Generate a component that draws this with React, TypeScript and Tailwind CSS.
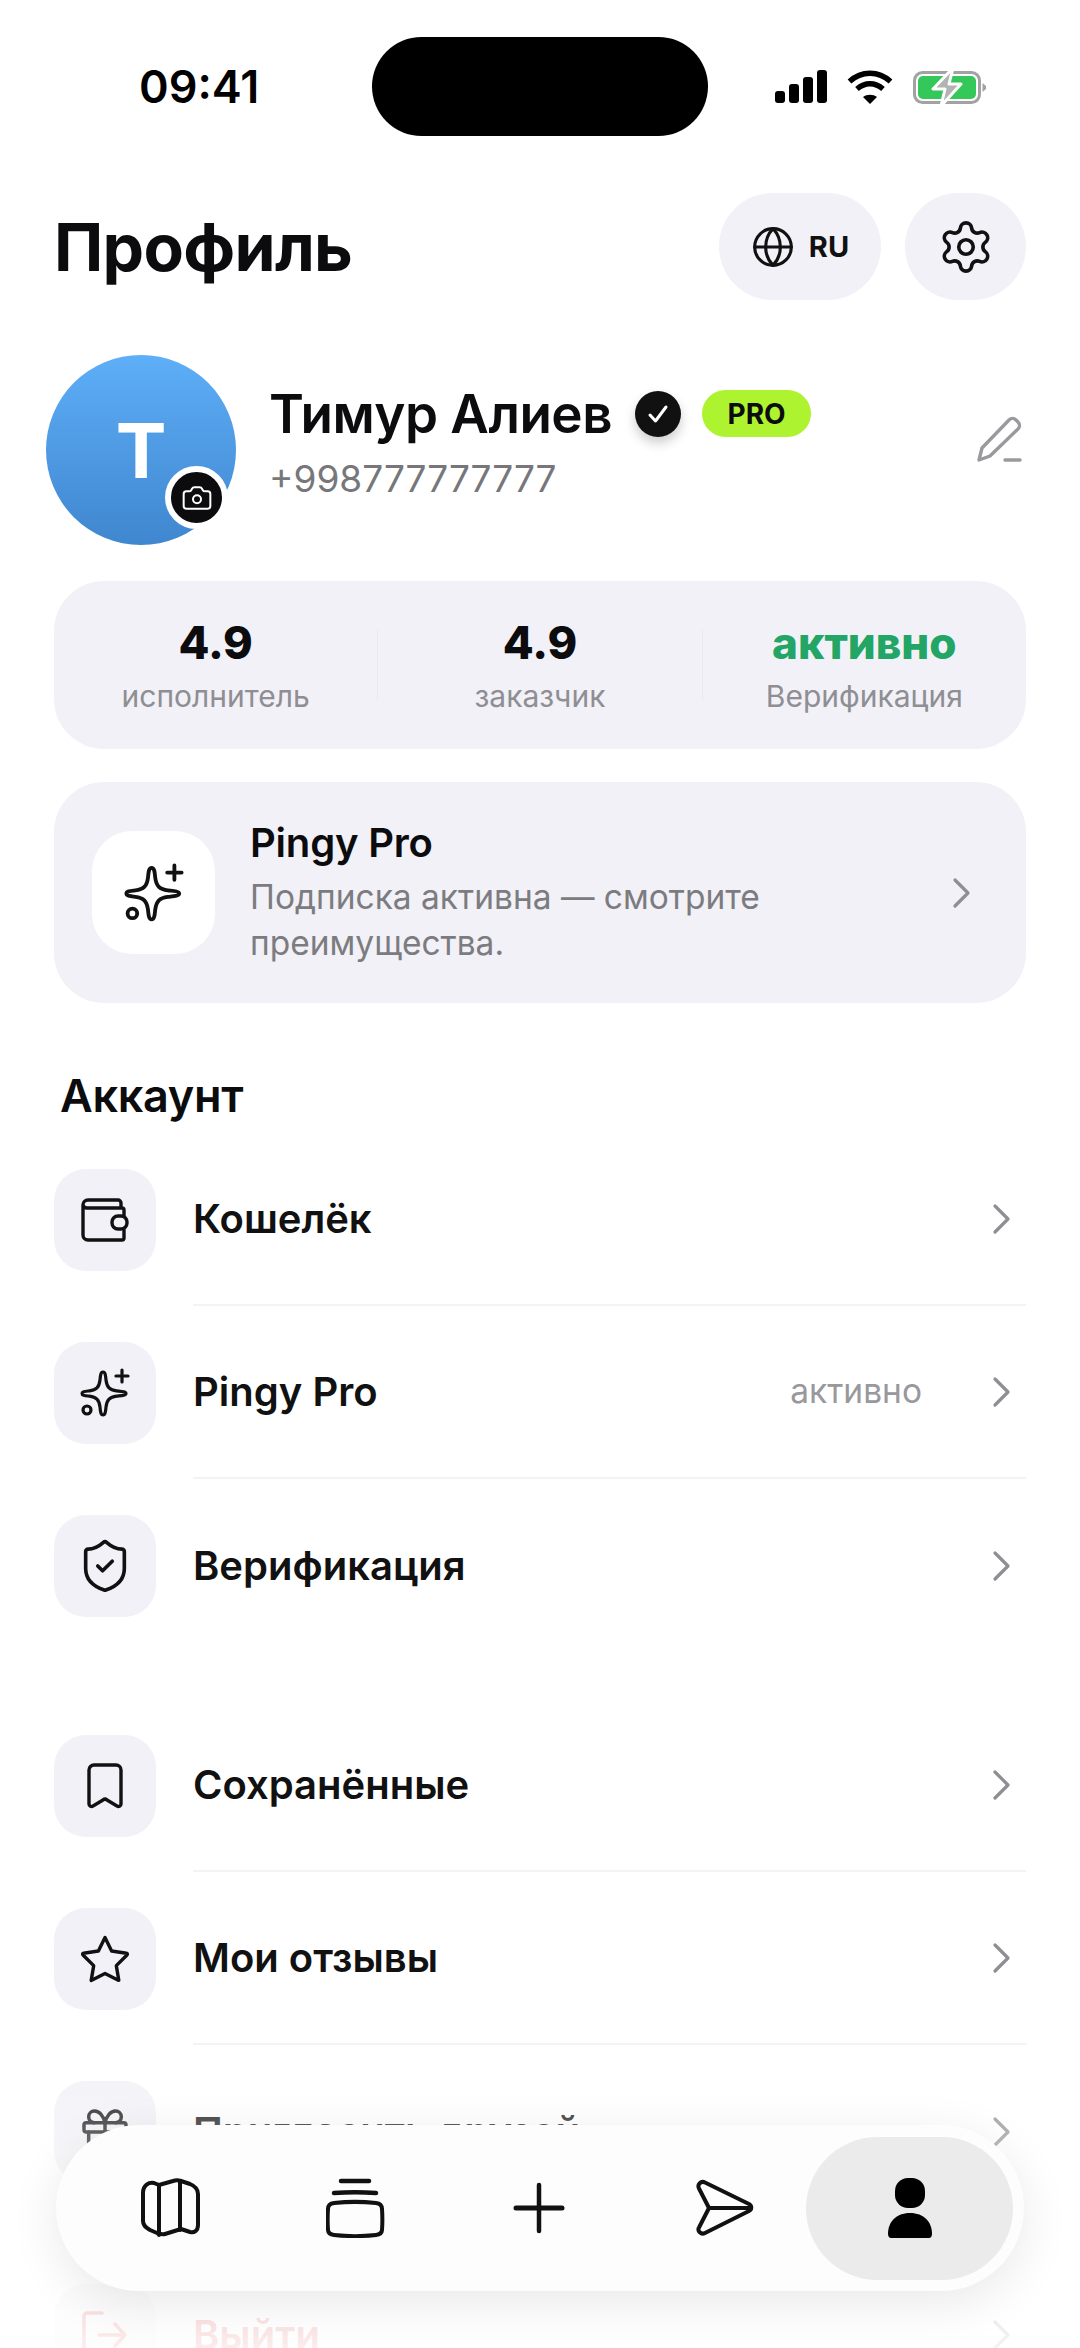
import { Camera, Gift, Globe, Settings, ShieldCheck } from "lucide-react";
import type { ReactNode } from "react";

const font = { fontFamily: "Inter, 'Noto Sans', sans-serif" };

function Chevron({ className = "" }: { className?: string }) {
  return (
    <svg width="20" height="34" viewBox="0 0 20 34" fill="none" className={className}>
      <path d="M3 4l13 13L3 30" stroke="currentColor" strokeWidth="3.2" strokeLinecap="round" strokeLinejoin="round" />
    </svg>
  );
}

function Sparkle({ size = 50 }: { size?: number }) {
  return (
    <svg width={size} height={size} viewBox="0 0 50 50" fill="none" stroke="#111" strokeWidth="3.2" strokeLinecap="round" strokeLinejoin="round">
      <path d="M23 4c2.4 0 2.6 4 3 8 .9 7.500 3.800 10 10.500 10.800 4 .5 9.500.6 9.500 2.700s-5.500 2.200-9.500 2.700C29.800 29 26.900 31.500 26 39c-.4 4-.6 8-3 8s-2.600-4-3-8c-.9-7.500-3.800-10-10.500-10.800C5.500 27.700 2 27.600 2 25.500s3.500-2.200 7.500-2.700C16.200 22 19.100 19.500 20 12c.4-4 .6-8 3-8z" />
      <circle cx="7" cy="42" r="4" />
      <path d="M42 2v12M36 8h12" />
    </svg>
  );
}

function WalletIcon() {
  return (
    <svg width="48" height="46" viewBox="0 0 48 46" fill="none" stroke="#111" strokeWidth="3.400" strokeLinecap="round" strokeLinejoin="round">
      <path d="M2 8a5 5 0 0 1 5-5h30a3 3 0 0 1 3 3v4M2 8v30a5 5 0 0 0 5 5h34a2 2 0 0 0 2-2v-8M2 8a4 4 0 0 0 4 3h35a2 2 0 0 1 2 2v6" />
      <rect x="31" y="19" width="15" height="13" rx="6" />
    </svg>
  );
}

function BookmarkIcon() {
  return (
    <svg width="36" height="46" viewBox="0 0 36 46" fill="none" stroke="#111" strokeWidth="3.400" strokeLinecap="round" strokeLinejoin="round">
      <path d="M2 7a5 5 0 0 1 5-5h22a5 5 0 0 1 5 5v34a2.500 2.500 0 0 1-4 2l-10-6a3 3 0 0 0-4 0L6 43a2.500 2.500 0 0 1-4-2z" />
    </svg>
  );
}

function StarIcon() {
  return (
    <svg width="50" height="48" viewBox="0 0 50 48" fill="none" stroke="#111" strokeWidth="3.400" strokeLinecap="round" strokeLinejoin="round">
      <path d="M25 2.500l6.600 13.500 14.900 2.200a1 1 0 0 1 .5 1.800L36.300 30.600l2.500 14.800-13.800-7-13.800 7 2.500-14.800L3 20a1 1 0 0 1 .5-1.800L18.400 16z" />
    </svg>
  );
}

function LogoutIcon() {
  return (
    <svg width="46" height="50" viewBox="0 0 46 50" fill="none" stroke="#e5484d" strokeWidth="3.400" strokeLinecap="round" strokeLinejoin="round">
      <path d="M20 3H5a3 3 0 0 0-3 3v38a3 3 0 0 0 3 3h15M17 25h26M33 14l10 11-10 11" />
    </svg>
  );
}

function SignalIcon() {
  return (
    <svg width="52" height="33" viewBox="0 0 52 33" fill="#000">
      <rect x="0" y="21" width="10" height="12" rx="3" />
      <rect x="14" y="14" width="10" height="19" rx="3" />
      <rect x="28" y="7" width="10" height="26" rx="3" />
      <rect x="42" y="0" width="10" height="33" rx="3" />
    </svg>
  );
}

function WifiIcon() {
  return (
    <svg width="46" height="34" viewBox="0 0 46 34" fill="none" stroke="#000" strokeWidth="5.500">
      <path d="M2.500 11.500c12-11 29-11 41 0" />
      <path d="M10 19c8-7 18-7 26 0" />
      <path d="M16 27l7 7 7-7c-4-3-10-3-14 0z" fill="#000" stroke="none" />
    </svg>
  );
}

function BatteryIcon() {
  return (
    <svg width="74" height="38" viewBox="0 0 74 38" fill="none">
      <rect x="1.500" y="4.500" width="65" height="30" rx="8" stroke="#a2a2a2" strokeWidth="3" />
      <rect x="5" y="8" width="58" height="23" rx="5" fill="#34c759" />
      <path d="M69.500 15l3.500 3v3l-3.500 3z" fill="#a2a2a2" />
      <path d="M40 0L20 21h12l-4 17 20-22H36z" fill="#b3b3b3" stroke="#fff" strokeWidth="3" strokeLinejoin="round" />
    </svg>
  );
}

function NavMap() {
  return (
    <svg width="60" height="60" viewBox="0 0 60 60" fill="none" stroke="#111" strokeWidth="4" strokeLinecap="round" strokeLinejoin="round">
      <path d="M3 15c0-8 6-11 11-10l5 2 14-4c3-1 5-1 8 0l9 3c5 2 8 5 8 10v31c0 6-4 8-8 7l-9-3-16 5c-3 1-5 0-8-1l-7-3c-5-3-7-5-7-9z" />
      <path d="M19 7v50M40 3v49" />
    </svg>
  );
}

function NavCards() {
  return (
    <svg width="60" height="60" viewBox="0 0 60 60" fill="none" stroke="#111" strokeLinecap="round">
      <path d="M15 3h28" strokeWidth="4.500" />
      <path d="M8 15c14-1 28-1 42 0" strokeWidth="4.500" />
      <path d="M8 25c14-1.500 28-1.500 42 0 4 .5 6 2 6 6 .5 7 .5 14 0 21-.2 3-2 4.500-6 5-14 1.500-28 1.500-42 0-4-.5-5.800-2-6-5-.5-7-.5-14 0-21 0-4 2-5.500 6-6z" strokeWidth="4" />
    </svg>
  );
}

function NavPlus() {
  return (
    <svg width="52" height="52" viewBox="0 0 52 52" fill="none" stroke="#111" strokeLinecap="round">
      <path d="M26 3v46" strokeWidth="4.500" />
      <path d="M3 26h46" strokeWidth="5" />
    </svg>
  );
}

function NavSend() {
  return (
    <svg width="58" height="58" viewBox="0 0 58 58" fill="none" stroke="#111" strokeWidth="4" strokeLinecap="round" strokeLinejoin="round">
      <path d="M9 3.500l44 21.500c3 1.500 3 5.500 0 7L9 54c-4 2-8-2-6-5.500L13 29 3 9.500C1 5.500 5 1.500 9 3.500z" />
      <path d="M13 29h42" />
    </svg>
  );
}

function NavPerson() {
  return (
    <svg width="44" height="60" viewBox="0 0 44 60" fill="#000">
      <rect x="7" y="0" width="30" height="30" rx="13" />
      <path d="M0 56c0-12 8-21 22-21s22 9 22 21c0 2-1 4-3 4H3c-2 0-3-2-3-4z" />
    </svg>
  );
}

function Row({ icon, label, value, divider = true, red = false }: { icon: ReactNode; label: string; value?: string; divider?: boolean; red?: boolean }) {
  return (
    <div className="flex h-[173px] items-center">
      <div className="flex h-[102px] w-[102px] shrink-0 items-center justify-center rounded-[32px] bg-[#f1f1f7]">{icon}</div>
      <div className={`ml-[37px] flex h-full flex-1 items-center pr-[14px] ${divider ? "border-b-2 border-[#f3f3f6]" : ""}`}>
        <span className={`flex-1 text-[40px] font-semibold leading-none ${red ? "text-[#e5484d]" : "text-[#111]"}`}>{label}</span>
        {value && <span className="mr-[70px] text-[33.500px] text-[#98989d]">{value}</span>}
        <Chevron className="text-[#8e8e93]" />
      </div>
    </div>
  );
}

function Stat({ value, label, green = false }: { value: string; label: string; green?: boolean }) {
  return (
    <div className="flex flex-1 flex-col items-center">
      <span className={`font-extrabold leading-[56px] ${green ? "text-[44px] text-[#22a565]" : "text-[45px] text-[#0c0c0e]"}`}>{value}</span>
      <span className="mt-[5px] text-[30px] leading-[40px] text-[#8e8e93]">{label}</span>
    </div>
  );
}

export default function App() {
  return (
    <div className="relative h-[2348px] w-[1080px] overflow-hidden bg-white" style={font}>
      {/* status bar */}
      <div className="flex items-center pl-[139px] pt-[37px]">
        <span className="w-[233px] text-[45px] font-semibold leading-none text-black">09:41</span>
        <div className="h-[99px] w-[336px] rounded-[50px] bg-black" />
        <div className="ml-[67px] flex items-center gap-[20px]">
          <SignalIcon />
          <WifiIcon />
          <BatteryIcon />
        </div>
      </div>

      {/* title */}
      <div className="mt-[57px] flex h-[107px] items-center px-[54px]">
        <h1 className="flex-1 text-[66px] font-bold leading-none tracking-[-0.7px] text-[#0c0c0e]">Профиль</h1>
        <div className="flex h-[107px] w-[162px] items-center justify-center gap-[14px] rounded-[54px] bg-[#f1f1f7]">
          <Globe size={44} strokeWidth={1.7} color="#111" />
          <span className="text-[29px] font-bold text-[#111]">RU</span>
        </div>
        <div className="ml-[24px] flex h-[107px] w-[121px] items-center justify-center rounded-[54px] bg-[#f1f1f7]">
          <Settings size={58} strokeWidth={1.5} color="#111" />
        </div>
      </div>

      {/* profile */}
      <div className="mt-[55px] flex items-center pl-[46px] pr-[57px]">
        <div className="relative flex h-[190px] w-[190px] items-center justify-center rounded-full bg-gradient-to-b from-[#5eaef8] to-[#3f87cf]">
          <span className="text-[76px] font-bold leading-none text-white">T</span>
          <div className="absolute left-[119px] top-[111px] flex h-[63px] w-[63px] items-center justify-center rounded-full border-[6px] border-white bg-[#0c0c0e]">
            <Camera size={32} strokeWidth={1.5} color="#fff" />
          </div>
        </div>
        <div className="ml-[33px] flex-1 -translate-y-[8px]">
          <div className="flex items-center">
            <span className="text-[53px] font-semibold leading-[62px] tracking-[-0.5px] text-[#0c0c0e]">Тимур Алиев</span>
            <div className="ml-[23px] flex h-[46px] w-[46px] items-center justify-center rounded-full bg-[#111] shadow-[0_6px_12px_rgba(0,0,0,0.2)]">
              <svg width="24" height="24" viewBox="0 0 24 24" fill="none" stroke="#fff" strokeWidth="3" strokeLinecap="round" strokeLinejoin="round">
                <path d="M4 13l5.500 6L20 5" />
              </svg>
            </div>
            <div className="ml-[21px] flex h-[47px] w-[109px] items-center justify-center rounded-[24px] bg-[#aef32f] text-[28px] font-bold text-[#0c0c0e]">PRO</div>
          </div>
          <div className="mt-[11px] text-[37px] leading-[46px] text-[#77777b]">+998777777777</div>
        </div>
        <svg width="48" height="48" viewBox="0 0 48 48" fill="none" stroke="#9a9a9e" strokeWidth="3.400" strokeLinecap="round" strokeLinejoin="round" className="-translate-y-[10px]">
          <path d="M34 4a5 5 0 0 1 7 0l2 2a5 5 0 0 1 0 7L15 40l-11 4 3-12z" />
          <path d="M30 44h15" />
        </svg>
      </div>

      {/* stats */}
      <div className="mx-[54px] mt-[36px] flex h-[168px] items-center rounded-[50px] bg-[#f1f1f7]">
        <Stat value="4.9" label="исполнитель" />
        <div className="h-[70px] w-px bg-[#e9e9ef]" />
        <Stat value="4.9" label="заказчик" />
        <div className="h-[70px] w-px bg-[#e9e9ef]" />
        <Stat value="активно" label="Верификация" green />
      </div>

      {/* pro card */}
      <div className="mx-[54px] mt-[33px] flex h-[221px] items-center rounded-[50px] bg-[#f1f1f7] pl-[38px] pr-[54px]">
        <div className="flex h-[123px] w-[123px] items-center justify-center rounded-[40px] bg-white">
          <Sparkle size={60} />
        </div>
        <div className="ml-[35px] flex-1">
          <div className="text-[40px] font-semibold leading-[48px] tracking-[-0.2px] text-[#0c0c0e]">Pingy Pro</div>
          <div className="mt-[7px] text-[33.500px] leading-[46px] text-[#7c7c80]">
            Подписка активна — смотрите<br />преимущества.
          </div>
        </div>
        <Chevron className="text-[#8e8e93]" />
      </div>

      {/* account */}
      <h2 className="ml-[60px] mt-[68px] text-[45px] font-semibold leading-[50px] tracking-[-0.3px] text-[#0c0c0e]">Аккаунт</h2>
      <div className="ml-[54px] mr-[54px] mt-[12px]">
        <Row icon={<WalletIcon />} label="Кошелёк" />
        <Row icon={<Sparkle />} label="Pingy Pro" value="активно" />
        <Row icon={<ShieldCheck size={58} strokeWidth={1.500} color="#111" />} label="Верификация" divider={false} />
      </div>

      <div className="ml-[54px] mr-[54px] mt-[47px]">
        <Row icon={<BookmarkIcon />} label="Сохранённые" />
        <Row icon={<StarIcon />} label="Мои отзывы" />
        <Row icon={<Gift size={56} strokeWidth={1.5} color="#111" />} label="Пригласить друзей" divider={false} />
      </div>

      <div className="ml-[54px] mr-[54px] mt-[30px]">
        <Row icon={<LogoutIcon />} label="Выйти" divider={false} red />
      </div>

      {/* bottom fade and tab bar */}
      <div className="absolute inset-x-0 bottom-0 h-[300px] bg-gradient-to-b from-white/0 via-white/60 via-50% to-white/90" />
      <div className="absolute left-[56px] top-[2125px] flex h-[166px] w-[968px] items-center rounded-[83px] bg-[#fdfdfd] pl-[43px] shadow-[0_12px_50px_rgba(0,0,0,0.09)]">
        <div className="flex items-center gap-[40px]">
          <div className="flex w-[144px] -translate-x-[1px] justify-center"><NavMap /></div>
          <div className="flex w-[144px] translate-x-[1px] justify-center"><NavCards /></div>
          <div className="flex w-[144px] justify-center"><NavPlus /></div>
          <div className="flex w-[144px] translate-x-[2px] justify-center"><NavSend /></div>
        </div>
        <div className="ml-[11px] flex h-[143px] w-[207px] items-center justify-center rounded-[72px] bg-[#ebebeb]">
          <NavPerson />
        </div>
      </div>
    </div>
  );
}
